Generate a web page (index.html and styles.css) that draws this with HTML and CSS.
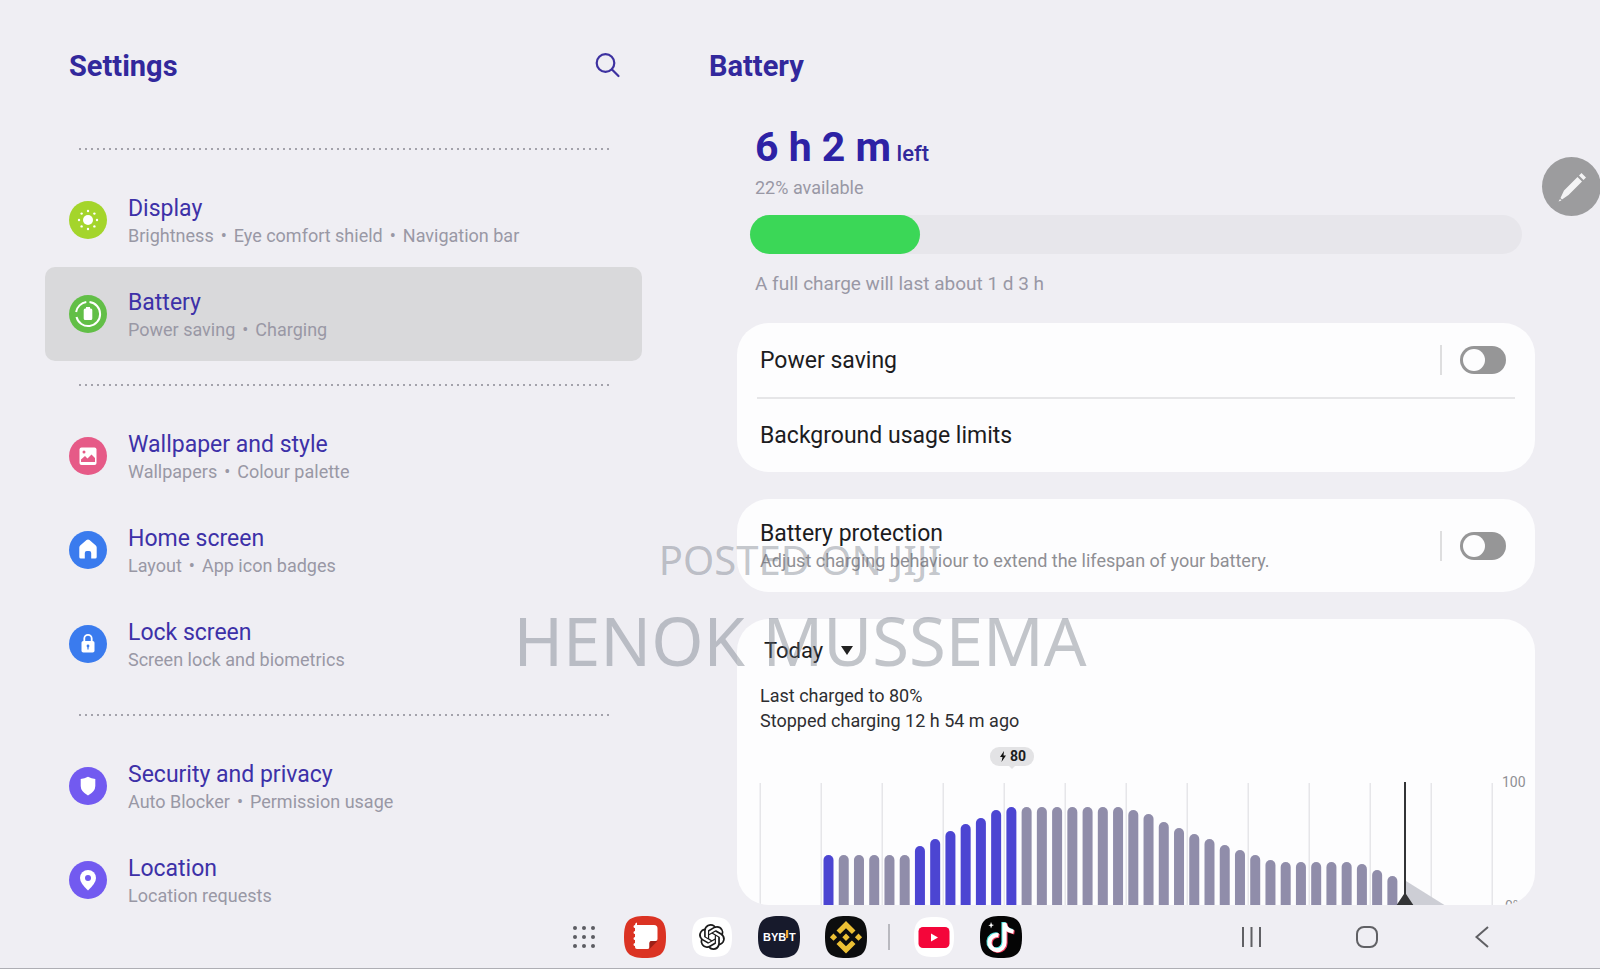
FILE: index.html
```html
<!DOCTYPE html>
<html lang="en">
<head>
    <meta charset="UTF-8">
    <meta name="viewport" content="width=device-width, initial-scale=1.0">
    <title>Settings - Battery</title>
    <link rel="stylesheet" href="styles.css">
</head>
<body>
    <div class="screen">
        <nav class="sidebar">
            <div class="sidebar-header">
                <h1>Settings</h1>
                <button class="icon-button" aria-label="Search">
                    <svg width="26" height="26" viewBox="0 0 26 26" fill="none" stroke="#3d31a0" stroke-width="2.200" stroke-linecap="round"><circle cx="10.500" cy="10" r="8.800"/><path d="M17 16.500 23.500 23"/></svg>
                </button>
            </div>
            <div class="divider"></div>
            <a class="item" href="#display">
                <svg class="item-icon" viewBox="0 0 38 38"><circle cx="19" cy="19" r="19" fill="#a4d52b"/><circle cx="19" cy="19" r="5" fill="#fff"/><g fill="#fff"><circle cx="19" cy="10" r="1.2"/><circle cx="19" cy="28" r="1.2"/><circle cx="10" cy="19" r="1.2"/><circle cx="28" cy="19" r="1.2"/><circle cx="12.6" cy="12.6" r="1.2"/><circle cx="25.4" cy="12.6" r="1.2"/><circle cx="12.6" cy="25.4" r="1.2"/><circle cx="25.4" cy="25.4" r="1.2"/></g></svg>
                <span class="item-text"><span class="item-title">Display</span><span class="item-sub">Brightness<i>•</i>Eye comfort shield<i>•</i>Navigation bar</span></span>
            </a>
            <a class="item selected" href="#battery">
                <svg class="item-icon" viewBox="0 0 38 38"><circle cx="19" cy="19" r="19" fill="#62bf47"/><path d="M20.500 7.100A12 12 0 1 1 7.500 22M7.100 17A12 12 0 0 1 17.300 7.100" fill="none" stroke="#fff" stroke-width="2"/><path d="M17 12h4v1.500h.8a1.500 1.500 0 0 1 1.500 1.500v8.500a1.500 1.500 0 0 1-1.500 1.500h-5.600a1.500 1.500 0 0 1-1.500-1.500V15a1.500 1.500 0 0 1 1.500-1.500h.8z" fill="#fff"/></svg>
                <span class="item-text"><span class="item-title">Battery</span><span class="item-sub">Power saving<i>•</i>Charging</span></span>
            </a>
            <div class="divider"></div>
            <a class="item" href="#wallpaper">
                <svg class="item-icon" viewBox="0 0 38 38"><circle cx="19" cy="19" r="19" fill="#e65a87"/><rect x="10.500" y="10.500" width="17" height="17.500" rx="2" fill="#fff"/><circle cx="15" cy="15" r="1.500" fill="#e65a87"/><path d="M12 25v-2.500l4-3.500 2.500 2.500 4-4 3.500 3.500v4z" fill="#e65a87"/></svg>
                <span class="item-text"><span class="item-title">Wallpaper and style</span><span class="item-sub">Wallpapers<i>•</i>Colour palette</span></span>
            </a>
            <a class="item" href="#home">
                <svg class="item-icon" viewBox="0 0 38 38"><circle cx="19" cy="19" r="19" fill="#3a7bee"/><path d="M19 8.500q.8 0 1.500.6l6.300 5.500q.9.800.9 2V26q0 1.500-1.500 1.500h-4V22q0-2-2-2h-2.400q-2 0-2 2v5.500h-4q-1.500 0-1.500-1.500v-9.400q0-1.200.9-2l6.300-5.500q.7-.6 1.500-.6z" fill="#fff"/></svg>
                <span class="item-text"><span class="item-title">Home screen</span><span class="item-sub">Layout<i>•</i>App icon badges</span></span>
            </a>
            <a class="item" href="#lock">
                <svg class="item-icon" viewBox="0 0 38 38"><circle cx="19" cy="19" r="19" fill="#3a7bee"/><path d="M15.300 17v-3.500a3.700 3.700 0 0 1 7.400 0V17" fill="none" stroke="#fff" stroke-width="1.800"/><rect x="12.500" y="16" width="13" height="11.500" rx="1.800" fill="#fff"/><circle cx="19" cy="21" r="1.400" fill="#3a7bee"/><path d="M18.400 21h1.200v3.500h-1.200z" fill="#3a7bee"/></svg>
                <span class="item-text"><span class="item-title">Lock screen</span><span class="item-sub">Screen lock and biometrics</span></span>
            </a>
            <div class="divider"></div>
            <a class="item" href="#security">
                <svg class="item-icon" viewBox="0 0 38 38"><circle cx="19" cy="19" r="19" fill="#725af0"/><path d="M19 9.800q3.500 2 7.300 2.200v7q0 5.500-7.300 9.500-7.300-4-7.300-9.500v-7q3.800-.2 7.300-2.200z" fill="#fff"/></svg>
                <span class="item-text"><span class="item-title">Security and privacy</span><span class="item-sub">Auto Blocker<i>•</i>Permission usage</span></span>
            </a>
            <a class="item" href="#location">
                <svg class="item-icon" viewBox="0 0 38 38"><circle cx="19" cy="19" r="19" fill="#725af0"/><path d="M19 29.500q-8-7.500-8-12.500a8 8 0 0 1 16 0q0 5-8 12.500z" fill="#fff"/><circle cx="19" cy="17" r="3" fill="#725af0"/></svg>
                <span class="item-text"><span class="item-title">Location</span><span class="item-sub">Location requests</span></span>
            </a>
        </nav>

        <main class="content">
            <h1 class="content-title">Battery</h1>
            <section class="summary">
                <p class="time-left"><strong>6 h 2 m</strong> left</p>
                <p class="available">22% available</p>
                <div class="level"><div class="level-fill" style="width: 22%"></div></div>
                <p class="full-charge">A full charge will last about 1 d 3 h</p>
            </section>

            <section class="card">
                <div class="row">
                    <label for="powerSaving">Power saving</label>
                    <span class="switch-wrap"><input type="checkbox" class="switch" id="powerSaving"></span>
                </div>
                <div class="row row-line"><a href="#limits">Background usage limits</a></div>
            </section>

            <section class="card">
                <div class="row row-tall">
                    <label for="protection">Battery protection<small>Adjust charging behaviour to extend the lifespan of your battery.</small></label>
                    <span class="switch-wrap"><input type="checkbox" class="switch" id="protection"></span>
                </div>
            </section>

            <section class="card usage">
                <div class="day">
                    <select aria-label="Day"><option>Today</option></select>
                    <svg class="day-arrow" width="12" height="9" viewBox="0 0 12 9"><path d="M0 0h12L6 9z" fill="#222"/></svg>
                </div>
                <p class="charge-info">Last charged to 80%<br>Stopped charging 12 h 54 m ago</p>
                <svg class="chart" id="chart" viewBox="0 0 798 180" role="img" aria-label="Battery level today">
                    <g id="grid" fill="#e6e6e9"></g>
                    <path d="M669 135l40 25h-40z" fill="#cdced5"/>
                    <g id="bars"></g>
                    <path d="M667 36h2v112l8 12h-18l8-12z" fill="#333436"/>
                    <rect x="253" y="1" width="44" height="19" rx="9" fill="#e3e3e5"/>
                    <path d="M271 19h8l-4 4z" fill="#e3e3e5"/>
                    <path d="M267 5l-4 6h2.500l-1 5 4.500-6.500h-2.500z" fill="#111"/>
                    <text class="chip-text" x="273" y="15">80</text>
                    <text class="axis-text" x="765" y="41">100</text>
                    <text class="axis-text" x="768" y="165">0%</text>
                </svg>
            </section>
        </main>
    </div>

    <footer class="dock">
        <div class="apps">
            <button aria-label="All apps"><svg width="30" height="42" viewBox="0 0 30 42" fill="#5c5c62"><circle cx="6" cy="12" r="2"/><circle cx="15" cy="12" r="2"/><circle cx="24" cy="12" r="2"/><circle cx="6" cy="21" r="2"/><circle cx="15" cy="21" r="2"/><circle cx="24" cy="21" r="2"/><circle cx="6" cy="30" r="2"/><circle cx="15" cy="30" r="2"/><circle cx="24" cy="30" r="2"/></svg></button>
            <button aria-label="Notes"><svg width="42" height="42" viewBox="0 0 42 42"><path fill="#db3323" d="M21 0c16 0 21 5 21 21s-5 21-21 21S0 37 0 21 5 0 21 0z"/><path d="M13 9h17q3.500 0 3.500 3.500V23q0 2-2 2h-4q-2 0-2 2v4q0 2-2 2H13q-2 0-2-2v-1a1.500 1.500 0 0 1 0-3v-3a1.500 1.500 0 0 1 0-3v-3a1.500 1.500 0 0 1 0-3v-3a1.500 1.500 0 0 1 0-3q0-2.500 2-2.500z" fill="#fff"/><path d="M25.500 33v-6q0-2 2-2h6z" fill="#9c1f17"/></svg></button>
            <button aria-label="ChatGPT"><svg width="42" height="42" viewBox="0 0 42 42"><path fill="#fff" d="M21 1c15 0 20 5 20 20s-5 20-20 20S1 36 1 21 6 1 21 1z"/><path transform="translate(8 8) scale(1.080)" fill="#1b1b1b" d="M22.2819 9.8211a5.9847 5.9847 0 0 0-.5157-4.9108 6.0462 6.0462 0 0 0-6.5098-2.9A6.0651 6.0651 0 0 0 4.9807 4.1818a5.9847 5.9847 0 0 0-3.9977 2.9 6.0462 6.0462 0 0 0 .7427 7.0966 5.98 5.98 0 0 0 .511 4.9107 6.051 6.051 0 0 0 6.5146 2.9001A5.9847 5.9847 0 0 0 13.2599 24a6.0557 6.0557 0 0 0 5.7718-4.2058 5.9894 5.9894 0 0 0 3.9977-2.9001 6.0557 6.0557 0 0 0-.7475-7.0729zm-9.022 12.6081a4.4755 4.4755 0 0 1-2.8764-1.0408l.1419-.0804 4.7783-2.7582a.7948.7948 0 0 0 .3927-.6813v-6.7369l2.02 1.1686a.071.071 0 0 1 .038.052v5.5826a4.504 4.504 0 0 1-4.4945 4.4944zm-9.6607-4.1254a4.4708 4.4708 0 0 1-.5346-3.0137l.142.0852 4.783 2.7582a.7712.7712 0 0 0 .7806 0l5.8428-3.3685v2.3324a.0804.0804 0 0 1-.0332.0615L9.74 19.9502a4.4992 4.4992 0 0 1-6.1408-1.6464zM2.3408 7.8956a4.485 4.485 0 0 1 2.3655-1.9728V11.6a.7664.7664 0 0 0 .3879.6765l5.8144 3.3543-2.0201 1.1685a.0757.0757 0 0 1-.071 0l-4.8303-2.7865A4.504 4.504 0 0 1 2.3408 7.872zm16.5963 3.8558L13.1038 8.364 15.1192 7.2a.0757.0757 0 0 1 .071 0l4.8303 2.7913a4.4944 4.4944 0 0 1-.6765 8.1042v-5.6772a.79.79 0 0 0-.407-.667zm2.0107-3.0231l-.142-.0852-4.7735-2.7818a.7759.7759 0 0 0-.7854 0L9.409 9.2297V6.8974a.0662.0662 0 0 1 .0284-.0615l4.8303-2.7866a4.4992 4.4992 0 0 1 6.6802 4.66zM8.3065 12.863l-2.02-1.1638a.0804.0804 0 0 1-.038-.0567V6.0742a4.4992 4.4992 0 0 1 7.3757-3.4537l-.142.0805L8.704 5.459a.7948.7948 0 0 0-.3927.6813zm1.0976-2.3654l2.602-1.4998 2.6069 1.4998v2.9994l-2.5974 1.4997-2.6067-1.4997Z"/></svg></button>
            <button aria-label="Bybit"><svg width="42" height="42" viewBox="0 0 42 42"><path fill="#171a2c" d="M21 0c16 0 21 5 21 21s-5 21-21 21S0 37 0 21 5 0 21 0z"/><text class="bybit-text" x="5" y="25">BYB</text><path d="M28 14h2.200v8H28z" fill="#f0a62b"/><text class="bybit-text" x="31" y="25">T</text></svg></button>
            <button aria-label="Binance"><svg width="42" height="42" viewBox="0 0 42 42"><path fill="#0c0d0e" d="M21 0c16 0 21 5 21 21s-5 21-21 21S0 37 0 21 5 0 21 0z"/><g fill="#ecc034"><path d="M21 5l9.500 9.500-3.600 3.600L21 12.200l-5.900 5.900-3.600-3.600zM21 37.500L11.500 28l3.600-3.600 5.900 5.900 5.900-5.900 3.600 3.600zM21 17.500l3.700 3.700-3.700 3.700-3.700-3.700zM8.500 17.600l3.600 3.600-3.600 3.600-3.600-3.600zM33.500 17.600l3.600 3.600-3.600 3.600-3.600-3.600z"/></g></svg></button>
            <span class="separator"></span>
            <button aria-label="YouTube"><svg width="42" height="42" viewBox="0 0 42 42"><path fill="#fff" d="M21 1c15 0 20 5 20 20s-5 20-20 20S1 36 1 21 6 1 21 1z"/><rect x="5.500" y="11" width="31" height="21" rx="4.500" fill="#f4063a"/><path d="M18 17.500v8l7-4z" fill="#fff"/></svg></button>
            <button aria-label="TikTok"><svg width="42" height="42" viewBox="0 0 42 42"><path fill="#050505" d="M21 0c16 0 21 5 21 21s-5 21-21 21S0 37 0 21 5 0 21 0z"/><g fill="none" stroke-width="4.200"><path stroke="#4de8e4" d="M17.500 18.500a7.500 7.500 0 1 0 6 7.200V6q0 7.500 9 9"/><path stroke="#f33d5d" d="M19.500 20a7.500 7.500 0 1 0 6 7.200V7.500q0 7.500 9 9"/><path stroke="#fff" d="M18.500 19.300a7.500 7.500 0 1 0 6 7.200V6.700q0 7.500 9 9"/></g><path d="M11 6l1 2.500 2 .5-2 1-1 2.500-.7-2.500-2-.5 2-1z" fill="#fff"/></svg></button>
        </div>
        <div class="nav-keys">
            <button aria-label="Recents"><svg width="30" height="30" viewBox="0 0 30 30" stroke="#606064" stroke-width="2"><path d="M6 5v20M14.500 5v20M23 5v20"/></svg></button>
            <button aria-label="Home"><svg width="30" height="30" viewBox="0 0 30 30" fill="none" stroke="#606064" stroke-width="2"><rect x="5" y="5" width="20" height="20" rx="7"/></svg></button>
            <button aria-label="Back"><svg width="30" height="30" viewBox="0 0 30 30" fill="none" stroke="#606064" stroke-width="2"><path d="M21 5 9.500 15 21 25"/></svg></button>
        </div>
    </footer>

    <button class="pen" aria-label="Air command">
        <svg width="59" height="59" viewBox="0 0 59 59" fill="#f4f4f5"><path d="M16.500 44.500l1.500-2.500 1.500 1.500zM18.500 41l3.500-7.500L35.500 20l4.500 4.500L26.500 38 20 42.500zM37 18.500l2.500-2.500 4.500 4.500-2.500 2.500z"/></svg>
    </button>

    <div class="watermark">
        <p class="watermark-small">POSTED ON JIJI</p>
        <p class="watermark-big">HENOK MUSSEMA</p>
    </div>

    <script>
        const svgNs = "http://www.w3.org/2000/svg";
        // top edge of each bar, every half hour
        const tops = [109, 109, 109, 109, 109, 109, 100, 93, 85, 78, 72, 64, 61, 61, 61, 61, 61, 61, 61, 61,
            64, 68, 76, 82, 88, 93, 99, 104, 109, 114, 116, 116, 116, 116, 116, 118, 124, 130];
        const charging = [0, 6, 7, 8, 9, 10, 11, 12];

        function addRect(parent, attrs) {
            let rect = document.createElementNS(svgNs, "rect");
            for (let name in attrs) rect.setAttribute(name, attrs[name]);
            document.getElementById(parent).appendChild(rect);
        }

        for (let i = 0; i < 13; i++) {
            addRect("grid", { x: 22.5 + i * 61, y: 37, width: 1.5, height: 123 });
        }
        tops.forEach((top, i) => {
            addRect("bars", {
                x: 86.5 + i * 15.24, y: top, width: 10, height: 200, rx: 5,
                fill: charging.includes(i) ? "#4c45d2" : "#908daa"
            });
        });
    </script>
</body>
</html>
```
FILE: styles.css
```css
* {
    box-sizing: border-box;
}

body {
    margin: 0;
    height: 100vh;
    display: flex;
    flex-direction: column;
    overflow: hidden;
    font-family: Roboto, sans-serif;
    background: #efeef3;
    color: #1c1c1e;
    border-bottom: 1px solid #aeaeb4;
}

h1, p {
    margin: 0;
}

a {
    color: inherit;
    text-decoration: none;
}

button {
    padding: 0;
    border: 0;
    background: none;
    cursor: pointer;
}

svg {
    display: block;
}

.screen {
    flex: 1;
    min-height: 0;
    display: flex;
}

/* Sidebar */
.sidebar {
    width: 42%;
    padding: 46px 30px 0 45px;
    overflow: hidden;
}

.sidebar-header {
    display: flex;
    justify-content: space-between;
    align-items: center;
    height: 40px;
    margin-bottom: 62px;
    padding: 0 21px 0 24px;
}

h1 {
    font-size: 29px;
    line-height: 40px;
    font-weight: 700;
    color: #32289c;
}

.divider {
    height: 2px;
    margin: 23px 30px 23px 32px;
    background: radial-gradient(circle, #a3a2ab 1px, transparent 1px) 0 0 / 6px 2px;
}

.item {
    display: flex;
    align-items: center;
    gap: 21px;
    height: 94px;
    padding: 0 24px;
    border-radius: 10px;
}

.selected {
    background: #d9d9db;
}

.item-icon {
    width: 38px;
    height: 38px;
}

.item-text {
    display: flex;
    flex-direction: column;
    padding-top: 4px;
}

.item-title {
    font-size: 23px;
    line-height: 28px;
    color: #3d31a8;
}

.item-sub {
    font-size: 18px;
    line-height: 26px;
    color: #9998a5;
}

.item-sub i {
    font-style: normal;
    margin: 0 7px;
}

/* Battery page */
.content {
    flex: 1;
    display: flex;
    flex-direction: column;
    padding: 46px 65px 0;
}

.content-title {
    margin-left: -28px;
}

.summary {
    padding: 39px 13px 0;
    margin-bottom: 27px;
}

.summary p {
    padding-left: 5px;
    color: #9998a5;
}

.summary .time-left {
    font-size: 22px;
    line-height: 44px;
    font-weight: 500;
    color: #32289c;
}

.time-left strong {
    font-size: 41px;
    color: #2d22a5;
}

.summary .available {
    font-size: 18px;
    line-height: 24px;
}

.level {
    height: 39px;
    margin: 15px 0 18px;
    border-radius: 20px;
    background: #e7e6eb;
}

.level-fill {
    height: 100%;
    border-radius: 20px;
    background: #3bd757;
}

.full-charge {
    font-size: 19px;
    line-height: 24px;
}

.card {
    padding: 0 20px;
    margin-bottom: 27px;
    border-radius: 32px;
    background: #fdfdfe;
}

.row {
    display: flex;
    justify-content: space-between;
    align-items: center;
    height: 74px;
    padding: 0 9px 0 3px;
    font-size: 23px;
}

.row-line {
    height: 75px;
    border-top: 2px solid #e6e6e8;
}

.row-tall {
    height: 93px;
}

.row-tall label {
    padding-top: 3px;
}

.row small {
    display: block;
    font-size: 18px;
    line-height: 28px;
    color: #8f8f94;
}

.switch-wrap {
    padding-left: 18px;
    border-left: 2px solid #dededf;
}

.switch {
    appearance: none;
    display: block;
    width: 46px;
    height: 28px;
    margin: 1px 0;
    border-radius: 14px;
    background: #969697;
    cursor: pointer;
}

.switch::before {
    content: "";
    display: block;
    width: 22px;
    height: 22px;
    margin: 3px;
    border-radius: 50%;
    background: #fdfdfe;
}

.switch:checked::before {
    margin-left: 21px;
}

/* Usage graph, cut off by the dock */
.usage {
    flex: 1;
    min-height: 0;
    margin-bottom: 0;
    padding: 18px 0 0;
    overflow: hidden;
}

.day {
    position: relative;
    width: 120px;
    margin-left: 27px;
}

.day select {
    appearance: none;
    width: 100%;
    height: 28px;
    padding: 0;
    border: 0;
    background: none;
    font: 22px/28px Roboto, sans-serif;
    color: #1c1c1e;
}

.day-arrow {
    position: absolute;
    left: 77px;
    top: 9px;
    pointer-events: none;
}

.charge-info {
    margin: 18px 23px 13px;
    font-size: 18px;
    line-height: 25px;
    color: #2e2e31;
}

.chart {
    width: 100%;
}

.chip-text {
    font-size: 14px;
    font-weight: 700;
    fill: #1c1c1e;
}

.axis-text {
    font-size: 14px;
    fill: #8f8f94;
}

/* Dock */
.dock {
    display: flex;
    justify-content: space-between;
    align-items: center;
    height: 63px;
    padding: 0 103px 0 569px;
}

.apps {
    display: flex;
    align-items: center;
    gap: 25px;
}

.separator {
    width: 2px;
    height: 26px;
    margin: 0 -2px 0 -4px;
    background: #b9b9bf;
}

.bybit-text {
    font-size: 11px;
    font-weight: 700;
    fill: #fff;
}

.nav-keys {
    display: flex;
    gap: 85px;
}

.pen {
    position: absolute;
    right: -1px;
    top: 157px;
    border-radius: 50%;
    background: #9c9c9e;
}

.watermark {
    position: absolute;
    left: 0;
    right: 0;
    top: 533px;
    text-align: center;
    font-family: "Noto Sans", sans-serif;
    color: rgba(105, 112, 124, 0.4);
    pointer-events: none;
}

.watermark-small {
    font-size: 40px;
    line-height: 54px;
}

.watermark-big {
    font-size: 67px;
    line-height: 106px;
}
```
